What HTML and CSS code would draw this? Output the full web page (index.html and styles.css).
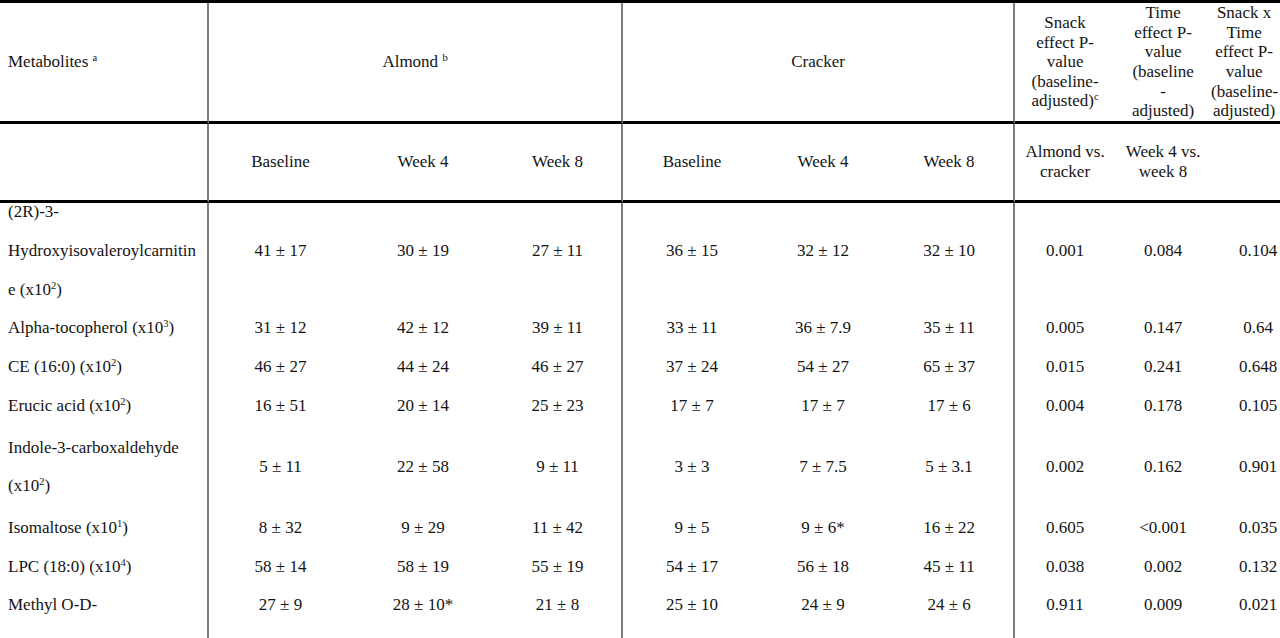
FILE: index.html
```html
<!DOCTYPE html>
<html lang="en">
<head>
<meta charset="utf-8">
<title>Metabolites table</title>
<link rel="stylesheet" href="styles.css">
</head>
<body>
<table class="tbl">
  <colgroup>
    <col class="c-name">
    <col class="c-a1"><col class="c-a2"><col class="c-a3">
    <col class="c-b1"><col class="c-b2"><col class="c-b3">
    <col class="c-p1"><col class="c-p2"><col class="c-p3">
  </colgroup>
  <thead class="head">
    <tr class="head-top">
      <th class="name vr">Metabolites <sup>a</sup></th>
      <th class="vr" colspan="3">Almond <sup>b</sup></th>
      <th class="vr" colspan="3">Cracker</th>
      <th>Snack<br>effect P-<br>value<br>(baseline-<br>adjusted)<sup>c</sup></th>
      <th>Time<br>effect P-<br>value<br>(baseline<br>-<br>adjusted)</th>
      <th class="last-col">Snack x<br>Time<br>effect P-<br>value<br>(baseline-<br>adjusted)</th>
    </tr>
    <tr class="head-sub">
      <th class="name vr"></th>
      <th>Baseline</th><th>Week 4</th><th class="vr">Week 8</th>
      <th>Baseline</th><th>Week 4</th><th class="vr">Week 8</th>
      <th>Almond vs.<br>cracker</th>
      <th>Week 4 vs.<br>week 8</th>
      <th></th>
    </tr>
  </thead>
  <tbody class="body">
    <tr>
      <td class="name vr"><div class="in">(2R)-3-<br>Hydroxyisovaleroylcarnitin<br>e (x10<sup>2</sup>)</div></td>
      <td><div class="in">41 ± 17</div></td><td><div class="in">30 ± 19</div></td><td class="vr"><div class="in">27 ± 11</div></td>
      <td><div class="in">36 ± 15</div></td><td><div class="in">32 ± 12</div></td><td class="vr"><div class="in">32 ± 10</div></td>
      <td><div class="in">0.001</div></td><td><div class="in">0.084</div></td><td><div class="in">0.104</div></td>
    </tr>
    <tr>
      <td class="name vr"><div class="in">Alpha-tocopherol (x10<sup>3</sup>)</div></td>
      <td><div class="in">31 ± 12</div></td><td><div class="in">42 ± 12</div></td><td class="vr"><div class="in">39 ± 11</div></td>
      <td><div class="in">33 ± 11</div></td><td><div class="in">36 ± 7.9</div></td><td class="vr"><div class="in">35 ± 11</div></td>
      <td><div class="in">0.005</div></td><td><div class="in">0.147</div></td><td><div class="in">0.64</div></td>
    </tr>
    <tr>
      <td class="name vr"><div class="in">CE (16:0) (x10<sup>2</sup>)</div></td>
      <td><div class="in">46 ± 27</div></td><td><div class="in">44 ± 24</div></td><td class="vr"><div class="in">46 ± 27</div></td>
      <td><div class="in">37 ± 24</div></td><td><div class="in">54 ± 27</div></td><td class="vr"><div class="in">65 ± 37</div></td>
      <td><div class="in">0.015</div></td><td><div class="in">0.241</div></td><td><div class="in">0.648</div></td>
    </tr>
    <tr>
      <td class="name vr"><div class="in">Erucic acid (x10<sup>2</sup>)</div></td>
      <td><div class="in">16 ± 51</div></td><td><div class="in">20 ± 14</div></td><td class="vr"><div class="in">25 ± 23</div></td>
      <td><div class="in">17 ± 7</div></td><td><div class="in">17 ± 7</div></td><td class="vr"><div class="in">17 ± 6</div></td>
      <td><div class="in">0.004</div></td><td><div class="in">0.178</div></td><td><div class="in">0.105</div></td>
    </tr>
    <tr class="gap">
      <td class="name vr"><div class="in">Indole-3-carboxaldehyde<br>(x10<sup>2</sup>)</div></td>
      <td><div class="in">5 ± 11</div></td><td><div class="in">22 ± 58</div></td><td class="vr"><div class="in">9 ± 11</div></td>
      <td><div class="in">3 ± 3</div></td><td><div class="in">7 ± 7.5</div></td><td class="vr"><div class="in">5 ± 3.1</div></td>
      <td><div class="in">0.002</div></td><td><div class="in">0.162</div></td><td><div class="in">0.901</div></td>
    </tr>
    <tr>
      <td class="name vr"><div class="in">Isomaltose (x10<sup>1</sup>)</div></td>
      <td><div class="in">8 ± 32</div></td><td><div class="in">9 ± 29</div></td><td class="vr"><div class="in">11 ± 42</div></td>
      <td><div class="in">9 ± 5</div></td><td><div class="in">9 ± 6*</div></td><td class="vr"><div class="in">16 ± 22</div></td>
      <td><div class="in">0.605</div></td><td><div class="in">&lt;0.001</div></td><td><div class="in">0.035</div></td>
    </tr>
    <tr>
      <td class="name vr"><div class="in">LPC (18:0) (x10<sup>4</sup>)</div></td>
      <td><div class="in">58 ± 14</div></td><td><div class="in">58 ± 19</div></td><td class="vr"><div class="in">55 ± 19</div></td>
      <td><div class="in">54 ± 17</div></td><td><div class="in">56 ± 18</div></td><td class="vr"><div class="in">45 ± 11</div></td>
      <td><div class="in">0.038</div></td><td><div class="in">0.002</div></td><td><div class="in">0.132</div></td>
    </tr>
    <tr class="last">
      <td class="name vr"><div class="in">Methyl O-D-</div></td>
      <td><div class="in">27 ± 9</div></td><td><div class="in">28 ± 10*</div></td><td class="vr"><div class="in">21 ± 8</div></td>
      <td><div class="in">25 ± 10</div></td><td><div class="in">24 ± 9</div></td><td class="vr"><div class="in">24 ± 6</div></td>
      <td><div class="in">0.911</div></td><td><div class="in">0.009</div></td><td><div class="in">0.021</div></td>
    </tr>
  </tbody>
</table>
</body>
</html>
```
FILE: styles.css
```css
html, body {
  margin: 0;
  padding: 0;
  overflow: hidden;
  background: #ffffff;
}

body {
  font-family: "Liberation Serif", "Tinos", "Times New Roman", "DejaVu Serif", serif;
  font-size: 17px;
  color: #141414;
}

.tbl {
  font-family: "Liberation Serif", "Tinos", "Times New Roman", "DejaVu Serif", serif;
  border-collapse: separate;
  border-spacing: 0;
  table-layout: fixed;
  width: 1305px;
  border-top: 3px solid #000;
}

.c-name { width: 209px; }
.c-a1 { width: 143px; }
.c-a2 { width: 142px; }
.c-a3 { width: 129px; }
.c-b1 { width: 138px; }
.c-b2 { width: 124px; }
.c-b3 { width: 130px; }
.c-p1 { width: 100px; }
.c-p2 { width: 96px; }
.c-p3 { width: 94px; }

th, td {
  font-family: inherit;
  padding: 0;
  font-weight: normal;
  text-align: center;
  vertical-align: middle;
}

.vr {
  border-right: 2px solid #7c7c7c;
}

.name {
  text-align: left;
  padding-left: 8px;
}

.head th {
  line-height: 19.6px;
}

.head-top th {
  height: 118px;
  border-bottom: 3px solid #000;
}

.head-top .last-col {
  padding-right: 28px;
}

.head-sub th {
  height: 76px;
  border-bottom: 3px solid #000;
}

.body td {
  line-height: 38.7px;
}

.in {
  margin-top: -9.65px;
  margin-bottom: 9.65px;
}

.gap td {
  padding-top: 3px;
  padding-bottom: 3px;
}

.last td {
  vertical-align: top;
  padding-bottom: 24px;
}

sup {
  font-size: 0.62em;
  line-height: 0;
  vertical-align: 0.55em;
}
```
